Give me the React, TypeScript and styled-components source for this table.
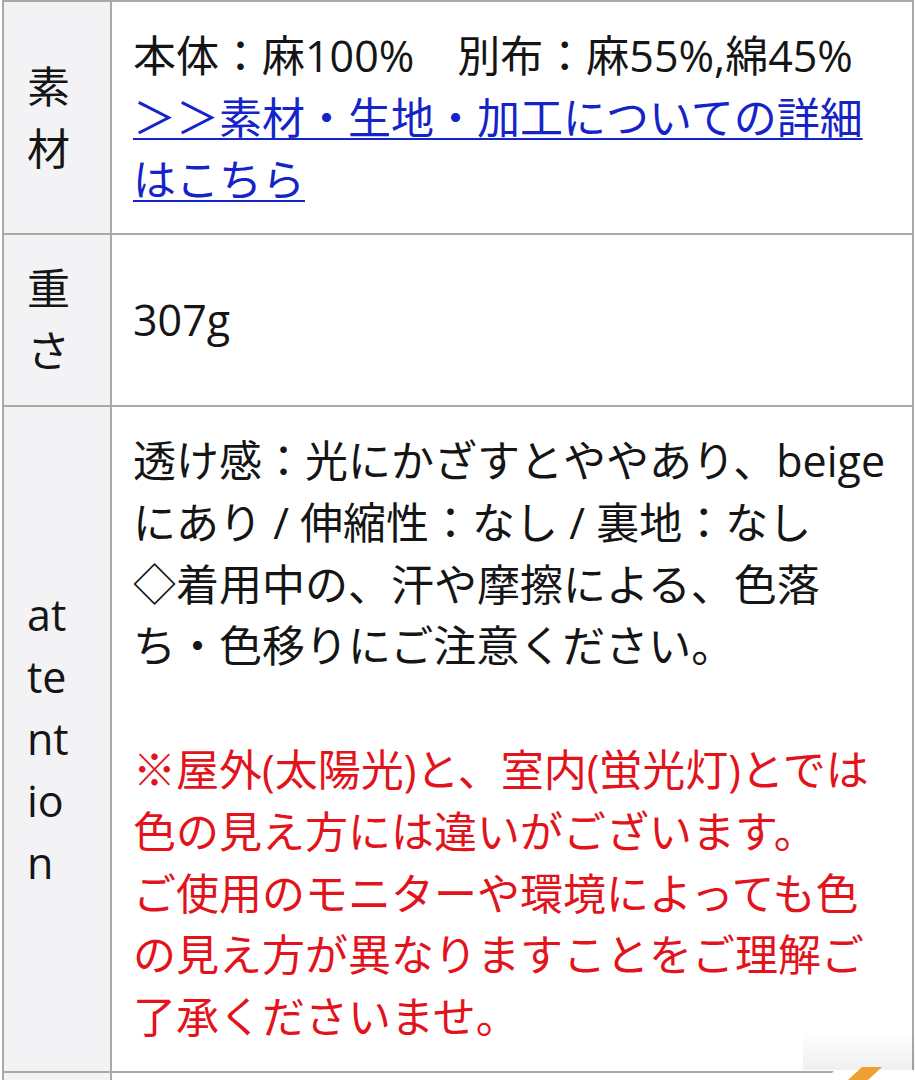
import React, {FC} from 'react';
import styled, {createGlobalStyle} from 'styled-components';

const GlobalStyle = createGlobalStyle`
  html, body {
    margin: 0;
    padding: 0;
    background: #fff;
  }
  body {
    font-family: "Open Sans", "Noto Sans CJK JP", sans-serif;
    color: #151515;
  }
`;

const Table = styled.table`
  width: 912px;
  margin-left: 2px;
  border-collapse: collapse;
  font-size: 43px;
  line-height: 61.8px;
`;

const HeadCell = styled.th`
  width: 52px;
  padding: 23px 31px 23px 23px;
  border: 2px solid #a9a9a9;
  background: #f3f3f5;
  font-weight: normal;
  text-align: left;
  vertical-align: middle;
  word-break: break-all;
`;

const DataCell = styled.td`
  padding: 23px 10px 23px 21px;
  border: 2px solid #a9a9a9;
  background: #fff;
  vertical-align: middle;
`;

const Link = styled.a`
  color: #1424c8;
  text-decoration: underline;
  text-decoration-thickness: 2px;
  text-underline-offset: 4px;
`;

const Note = styled.span`
  color: #e3131b;
`;

const Corner = styled.div`
  position: fixed;
  right: 0;
  bottom: 0;
  width: 120px;
  height: 56px;
  pointer-events: none;

  & svg {
    display: block;
  }
`;

type Row = {
  key: string;
  head: React.ReactNode;
  body: React.ReactNode;
};

const rows: Row[] = [
  {
    key: 'material',
    head: '素材',
    body: (
      <>
        本体：麻100%　別布：麻55%,綿45%
        <br />
        <Link href="#">
          ＞＞素材・生地・加工についての詳細
          <br />
          はこちら
        </Link>
      </>
    ),
  },
  {
    key: 'weight',
    head: '重さ',
    body: <>307g</>,
  },
  {
    key: 'attention',
    head: 'attention',
    body: (
      <>
        透け感：光にかざすとややあり、beige
        <br />
        にあり / 伸縮性：なし / 裏地：なし
        <br />
        ◇着用中の、汗や摩擦による、色落
        <br />
        ち・色移りにご注意ください。
        <br />
        <br />
        <Note>
          ※屋外(太陽光)と、室内(蛍光灯)とでは
          <br />
          色の見え方には違いがございます。
          <br />
          ご使用のモニターや環境によっても色
          <br />
          の見え方が異なりますことをご理解ご
          <br />
          了承くださいませ。
        </Note>
      </>
    ),
  },
  // next row starts just at the bottom edge, its text is out of view
  {
    key: 'next',
    head: '\u00a0',
    body: '\u00a0',
  },
];

const App: FC = () => (
  <>
    <GlobalStyle />
    <Table>
      <tbody>
        {rows.map(({key, head, body}) => (
          <tr key={key}>
            <HeadCell>{head}</HeadCell>
            <DataCell>{body}</DataCell>
          </tr>
        ))}
      </tbody>
    </Table>
    <Corner aria-hidden>
      <svg width="120" height="56" viewBox="0 0 120 56">
        <defs>
          <linearGradient id="fade" x1="0" y1="0" x2="0" y2="1">
            <stop offset="0" stopColor="#000" stopOpacity="0" />
            <stop offset="1" stopColor="#000" stopOpacity="0.06" />
          </linearGradient>
        </defs>
        <rect x="8" y="6" width="112" height="40" fill="url(#fade)" />
        <polygon points="40,46 120,46 120,56 30,56" fill="#fff" />
        <polygon points="67,43 87,43 73,56 53,56" fill="#f0a030" />
      </svg>
    </Corner>
  </>
);

export default App;
